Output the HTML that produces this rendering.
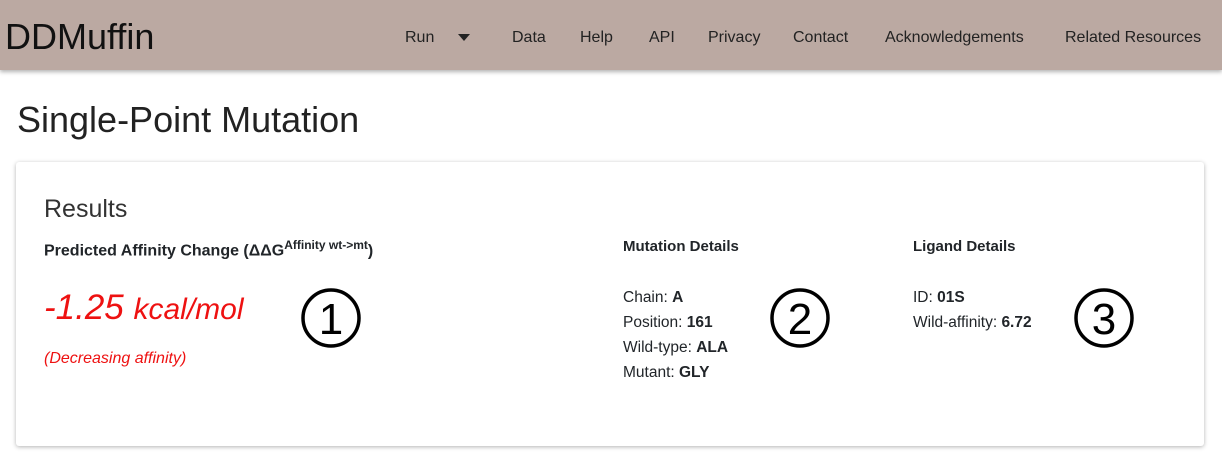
<!DOCTYPE html>
<html><head><meta charset="utf-8"><style>
body{margin:0;width:1222px;height:459px;background:#fff;font-family:"Liberation Sans",sans-serif;color:#212529;position:relative;overflow:hidden}
.nav{position:absolute;left:0;top:0;width:1222px;height:70px;background:#bba9a2;box-shadow:0 2px 4px rgba(0,0,0,.3)}
.a{position:absolute;white-space:nowrap}
.brand{left:5px;top:16px;font-size:36px;color:#111}
.ni{top:29px;font-size:16px;color:#222}
h1{position:absolute;left:17px;top:99px;margin:0;font-weight:300;font-size:36px;color:#222}
.card{position:absolute;left:16px;top:162px;width:1188px;height:284px;box-shadow:0 1px 4px rgba(0,0,0,.3);border-radius:3px}
.b{font-weight:bold;font-size:15px}
.t{font-size:15.5px;line-height:25px}
.red{color:#e11}
</style></head><body>
<div class="nav">
<div class="a brand">DDMuffin</div>
<div class="a ni" style="left:405px">Run</div>
<svg class="a" style="left:458px;top:34px" width="12" height="8"><path d="M0 0H12L6 7Z" fill="#222"/></svg>
<div class="a ni" style="left:512px">Data</div>
<div class="a ni" style="left:580px">Help</div>
<div class="a ni" style="left:649px">API</div>
<div class="a ni" style="left:708px">Privacy</div>
<div class="a ni" style="left:793px">Contact</div>
<div class="a ni" style="left:885px">Acknowledgements</div>
<div class="a ni" style="left:1065px">Related Resources</div>
</div>
<h1>Single-Point Mutation</h1>
<div class="card"></div>
<div class="a" style="left:44px;top:195px;font-size:25px;font-weight:300;color:#333">Results</div>
<div class="a b" style="left:44px;top:238px;font-size:16px">Predicted Affinity Change (ΔΔG<sup style="font-size:12px">Affinity wt-&gt;mt</sup>)</div>
<div class="a red" style="left:44px;top:288px;font-size:35px;font-style:italic">-1.25 <span style="font-size:30px">kcal/mol</span></div>
<div class="a red" style="left:44px;top:350px;font-size:16px;font-style:italic">(Decreasing affinity)</div>
<div class="a b" style="left:623px;top:238px">Mutation Details</div>
<div class="a t" style="left:623px;top:285px">Chain: <b>A</b><br>Position: <b>161</b><br>Wild-type: <b>ALA</b><br>Mutant: <b>GLY</b></div>
<div class="a b" style="left:913px;top:238px">Ligand Details</div>
<div class="a t" style="left:913px;top:285px">ID: <b>01S</b><br>Wild-affinity: <b>6.72</b></div>
<svg class="a" style="left:300px;top:287px" width="62" height="62"><circle cx="31" cy="31" r="28" fill="none" stroke="#000" stroke-width="3.5"/><text x="31" y="47" text-anchor="middle" font-size="44" font-family="Liberation Sans">1</text></svg>
<svg class="a" style="left:769px;top:287px" width="62" height="62"><circle cx="31" cy="31" r="28" fill="none" stroke="#000" stroke-width="3.5"/><text x="31" y="47" text-anchor="middle" font-size="44" font-family="Liberation Sans">2</text></svg>
<svg class="a" style="left:1073px;top:287px" width="62" height="62"><circle cx="31" cy="31" r="28" fill="none" stroke="#000" stroke-width="3.5"/><text x="31" y="47" text-anchor="middle" font-size="44" font-family="Liberation Sans">3</text></svg>
</body></html>
